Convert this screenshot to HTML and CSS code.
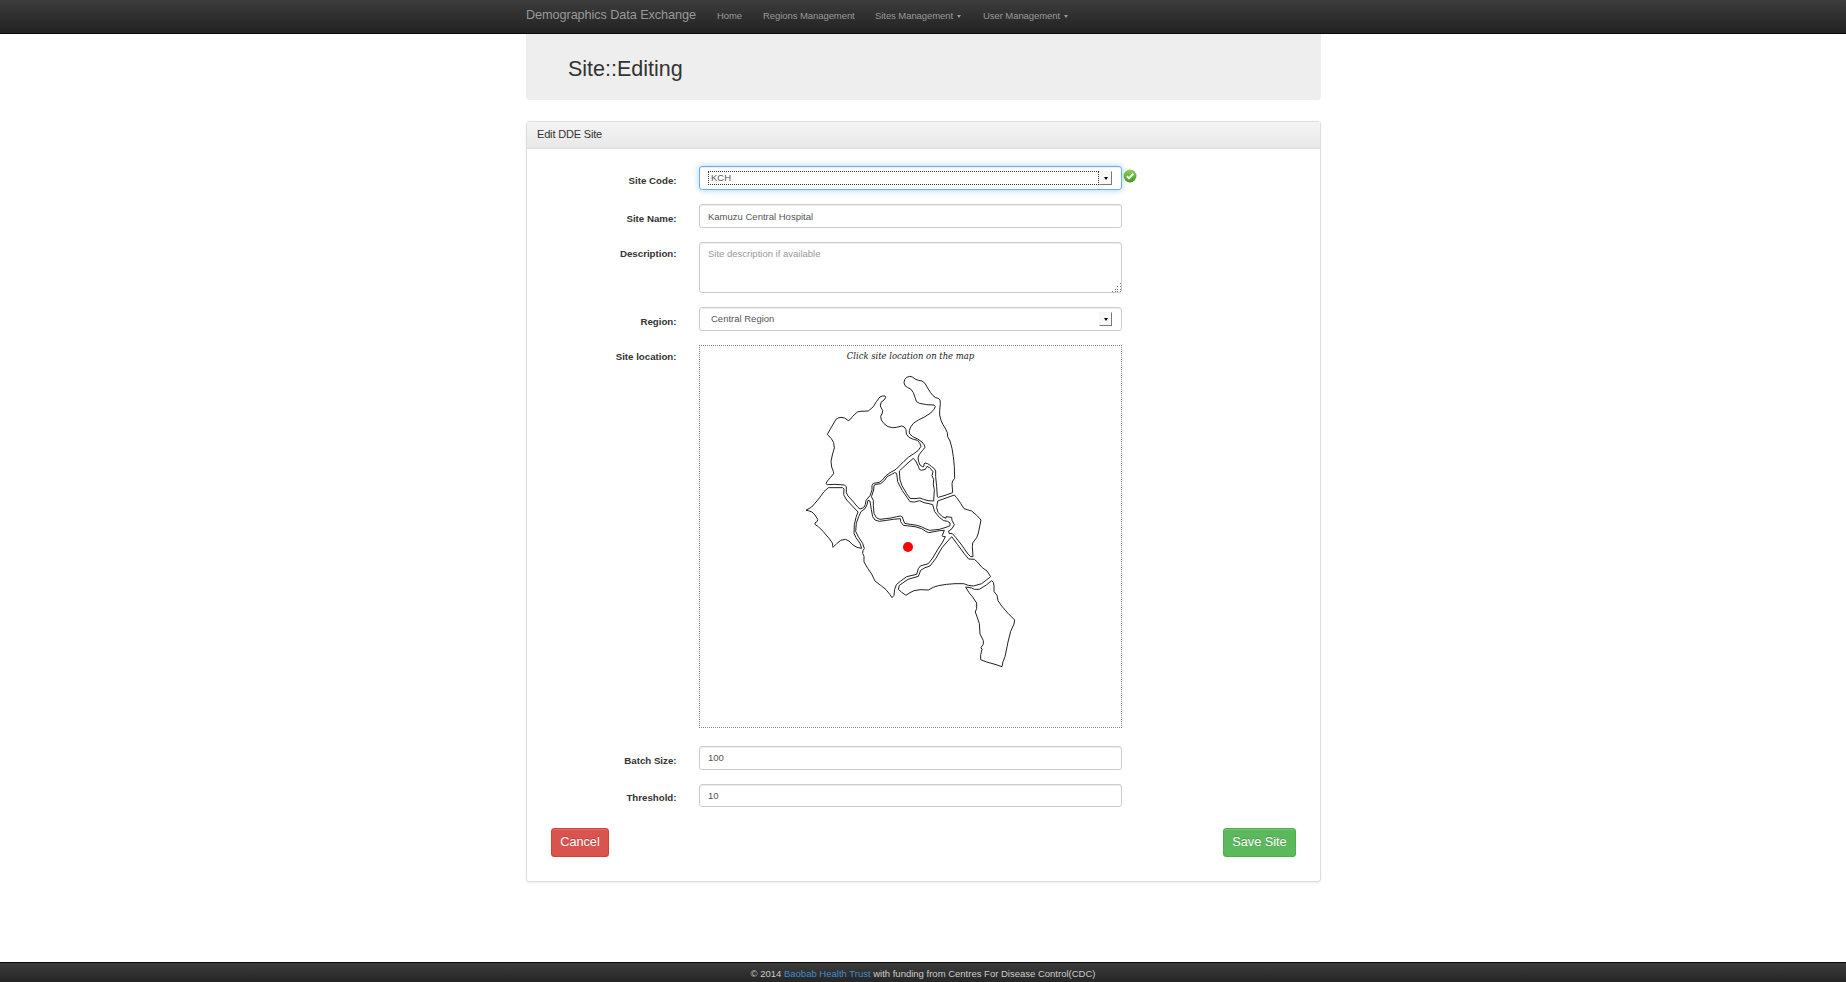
FILE: index.html
```html
<!DOCTYPE html>
<html lang="en">
<head>
<meta charset="utf-8">
<title>Demographics Data Exchange</title>
<link rel="stylesheet" href="styles.css">
</head>
<body>
<nav class="navbar">
  <div class="container nav-inner">
    <a class="brand">Demographics Data Exchange</a>
    <a class="nav-link home">Home</a>
    <a class="nav-link regions">Regions Management</a>
    <a class="nav-link sites">Sites Management<i class="caret"></i></a>
    <a class="nav-link">User Management<i class="caret"></i></a>
  </div>
</nav>
<main class="container">
  <header class="jumbotron"><h1>Site::Editing</h1></header>
  <section class="panel">
    <div class="panel-heading">Edit DDE Site</div>
    <form class="panel-body">
      <div class="row">
        <label>Site Code:</label>
        <div class="control select focused"><span class="value">KCH</span><span class="arrow"></span></div>
        <svg class="valid" viewBox="0 0 14 14"><defs><linearGradient id="ok" x2="0" y2="1"><stop stop-color="#8fd060"/><stop offset="1" stop-color="#3f9a20"/></linearGradient></defs><circle cx="7" cy="7" r="6.5" fill="url(#ok)"/><path d="M3.8 7.2l2.2 2.2 4.3-4.7" fill="none" stroke="#fff" stroke-width="2"/></svg>
      </div>
      <div class="row">
        <label>Site Name:</label>
        <div class="control name">Kamuzu Central Hospital</div>
      </div>
      <div class="row area-row">
        <label>Description:</label>
        <div class="control area">Site description if available
          <svg class="grip" viewBox="0 0 9 9"><path d="M8 0h1v1h-1zM8 3h1v1h-1zM5 3h1v1h-1zM8 6h1v1h-1zM5 6h1v1h-1zM3 6h1v1h-1zM8 8h1v1h-1zM5 8h1v1h-1zM3 8h1v1h-1zM0 8h1v1h-1z" fill="#777"/></svg>
        </div>
      </div>
      <div class="row">
        <label>Region:</label>
        <div class="control select"><span class="value">Central Region</span><span class="arrow"></span></div>
      </div>
      <div class="row map-row">
        <label>Site location:</label>
        <div class="map">
          <p class="map-title">Click site location on the map</p>
          <svg class="map-svg" viewBox="0 0 720 960">
            <g class="district">
              <path d="M372 68L374 59 380 52 389 49 397 51 405 57 415 61 426 63 435 70 443 84 451 97 459 107 466 113 475 115 480 120 481 130 479 152 479 165 483 181 489 194 497 207 502 218 503 230 510 243 516 265 520 290 523 320 524 355 518 363 516 371 518 398 495 406 475 412 472 410 470 380 467 350 467 333 463 326 455 320 449 315 443 311 435 309 432 312 432 319 427 320 420 315 416 305 414 294 418 283 427 272 435 262 433 255 426 246 413 237 398 230 388 220 388 211 392 201 400 190 415 180 435 170 452 159 462 148 466 140 462 135 440 134 418 130 409 124 405 112 400 98 392 87 382 82 375 77z"/>
              <path d="M142 223L155 200 168 178 174 174 183 172 194 174 205 182 211 178 218 169 232 156 240 154 265 153 280 140 289 125 300 111 307 108 315 108 317 113 312 120 303 127 301 138 308 152 307 159 302 169 304 180 312 191 324 200 338 203 350 202 365 198 373 201 378 209 379 222 387 232 400 238 413 241 420 251 423 259 415 271 400 282 386 291 372 304 348 328 330 338 318 347 307 360 298 367 280 370 276 376 276 390 270 407 258 421 256 434 251 443 240 447 232 440 218 423 204 408 199 398 199 380 193 375 165 373 142 374 138 371 142 363 151 353 161 341 160 334 155 321 153 304 157 285 163 264 161 248 154 236z"/>
              <path d="M78 451L95 441 105 430 118 414 132 395 145 383 188 383 192 387 191 404 200 420 220 441 234 456 228 472 223 494 222 520 228 533 240 550 245 565 231 562 219 555 207 543 197 538 182 541 170 551 159 562 157 549 148 536 129 514 115 500 105 493 105 489 112 484 113 478 105 465 96 456 85 452z"/>
              <path d="M264 421L261 434 255 446 243 455 236 470 229 490 227 514 236 532 248 550 253 566 249 571 248 580 252 589 252 606 263 625 275 642 285 663 302 676 318 689 330 704 336 713 342 706 344 688 349 674 361 664 380 650 410 643 415 626 421 618 445 611 458 594 474 567 488 546 496 530 488 529 487 526 493 511 479 512 446 518 437 514 425 506 405 500 370 496 362 485 361 476 340 478 320 481 298 484 285 480 278 470 274 449 270 423z"/>
              <path d="M275 408L281 390 282 376 288 373 302 371 314 361 321 350 335 343 344 338 350 340 353 365 367 392 381 412 390 425 404 426 419 422 432 428 447 431 458 434 464 455 478 472 491 482 503 484 510 489 510 497 498 502 478 508 449 511 438 507 424 500 406 495 390 493 374 490 370 480 367 471 361 468 350 470 333 474 300 478 289 473 282 460 280 436 280 421 274 410z"/>
              <path d="M358 333L377 315 400 295 407 303 415 319 418 328 424 331 436 328 441 319 449 323 459 335 456 347 461 358 460 374 463 389 461 423 444 422 430 418 420 414 405 416 390 415 380 401 366 377 360 360z"/>
              <path d="M473 423L523 405 530 413 542 430 552 446 562 449 575 453 590 466 603 480 600 495 595 519 590 533 578 549 577 560 579 590 572 590 564 582 545 555 527 532 517 521 507 520 506 513 516 506 523 494 516 481 515 472 498 470 498 475 487 470 474 457 470 443z"/>
              <path d="M515 530L533 554 552 580 566 597 583 598 592 606 607 623 621 633 632 650 619 660 605 671 580 678 565 676 551 671 525 671 500 673 475 677 460 682 445 690 420 689 402 692 390 698 378 706 365 697 355 688 358 676 384 658 415 649 422 631 435 623 450 618 467 596 486 563z"/>
              <path d="M557 681L575 684 583 688 598 688 619 675 635 662 640 667 642 677 642 695 651 706 654 722 665 738 684 760 704 780 702 792 692 814 684 846 675 890 669 905 666 920 645 913 620 906 602 899 602 884 606 868 603 863 610 852 610 842 600 822 598 790 592 773 586 756 590 745 590 729 578 711 567 698z"/>
            </g>
            <circle class="site-dot" cx="384" cy="561" r="15"/>
          </svg>
        </div>
      </div>
      <div class="row">
        <label>Batch Size:</label>
        <div class="control">100</div>
      </div>
      <div class="row last">
        <label>Threshold:</label>
        <div class="control">10</div>
      </div>
      <div class="actions">
        <a class="btn danger">Cancel</a>
        <a class="btn success">Save Site</a>
      </div>
    </form>
  </section>
</main>
<footer class="footer">© 2014&nbsp;<a>Baobab Health Trust</a>&nbsp;with funding from Centres For Disease Control(CDC)</footer>
</body>
</html>
```
FILE: styles.css
```css
* { box-sizing: border-box; }
body {
  margin: 0;
  height: 982px;
  display: flex;
  flex-direction: column;
  overflow: hidden;
  background: #fff;
  color: #333;
  font: 9.5px/14px "Liberation Sans", Arial, sans-serif;
}
.container { width: 795px; margin: 0 auto 0 526px; }
.navbar {
  height: 34px;
  flex: none;
  background: linear-gradient(#3c3c3c, #222);
  border-bottom: 1px solid #080808;
}
.nav-inner { display: flex; color: #999; line-height: 32px; white-space: nowrap; }
.brand { width: 191px; font-size: 12.7px; line-height: 30px; letter-spacing: -.08px; }
.nav-link { display: flex; align-items: center; height: 32px; letter-spacing: -.07px; }
.home { width: 46px; }
.regions { width: 112px; }
.sites { width: 108px; }
.caret { margin-left: 4px; border: 2.5px solid transparent; border-top: 3px solid #999; border-bottom: 0; }
.jumbotron { height: 66px; padding: 21px 42px; background: #eee; border-radius: 0 0 4px 4px; }
h1 { margin: 0; font-size: 21.5px; line-height: 28px; font-weight: 400; }
.panel {
  height: 761px;
  margin-top: 21px;
  border: 1px solid #ddd;
  border-radius: 3px;
  box-shadow: 0 1px 2px rgba(0, 0, 0, .08);
}
.panel-heading {
  height: 27px;
  padding-left: 10px;
  font-size: 11px;
  letter-spacing: -.17px;
  line-height: 25px;
  background: linear-gradient(#f5f5f5, #e8e8e8);
  border-bottom: 1px solid #ddd;
}
.panel-body { padding: 17px 24px 0; }
.row { display: flex; height: 24px; margin-bottom: 14px; }
label {
  width: 125.5px;
  margin-right: 22.5px;
  padding-top: 8px;
  text-align: right;
  font-size: 9.7px;
  font-weight: 700;
}
.control {
  width: 423px;
  height: 24px;
  padding: 0 8px;
  line-height: 22px;
  border: 1px solid #ccc;
  border-radius: 3px;
  color: #555;
  box-shadow: inset 0 1px 1px rgba(0, 0, 0, .075);
}
.name { line-height: 24px; }
.select { display: flex; align-items: center; padding-right: 9px; }
.focused { border-color: #66afe9; box-shadow: inset 0 1px 1px rgba(0, 0, 0, .075), 0 0 6px rgba(102, 175, 233, .6); }
.value { flex: 1; height: 14px; line-height: 12px; padding-left: 2px; border: 1px solid transparent; }
.focused .value { border: 1px dotted #333; }
.arrow {
  display: grid;
  place-items: center;
  width: 13px;
  height: 14px;
  background: #f8f8f8;
  border: 1px solid;
  border-color: #f5f5f5 #777 #777 #f5f5f5;
}
.arrow::before { content: ""; border: 2px solid transparent; border-top: 3px solid #000; border-bottom: 0; }
.valid { width: 14px; height: 14px; margin: 3px 0 0 1px; }
.area-row { height: 51px; }
.area-row label { padding-top: 5px; }
.area { position: relative; height: 51px; color: #999; }
.grip { position: absolute; right: 0; bottom: 0; width: 9px; height: 9px; }
.map-row { height: 383px; margin-bottom: 18px; }
.map-row label { padding-top: 5px; }
.map { width: 423px; height: 383px; border: 1px dotted #888; }
.map-title {
  margin: 0;
  height: 14px;
  padding-top: 3px;
  text-align: center;
  color: #222;
  font: italic 9.4px/14px "DejaVu Serif", serif;
  font-stretch: condensed;
}
.map-svg { display: block; width: 240px; height: 320px; margin-left: 80px; }
.district { fill: none; stroke: #222; stroke-width: 3; stroke-linejoin: round; }
.site-dot { fill: #f00; }
.last { height: 23px; margin-bottom: 21px; }
.last label { padding-top: 7px; }
.last .control { height: 23px; }
.actions { display: flex; justify-content: space-between; }
.btn {
  height: 29px;
  text-align: center;
  white-space: nowrap;
  font-size: 12.7px;
  line-height: 26px;
  color: #fff;
  border: 1px solid;
  border-radius: 3px;
  text-shadow: 0 -1px 0 rgba(0, 0, 0, .2);
  box-shadow: inset 0 1px 0 rgba(255, 255, 255, .15);
}
.danger { width: 58px; background: #d9534f; border-color: #d43f3a; }
.success { width: 73px; background: #5cb85c; border-color: #4cae4c; }
.footer {
  display: flex;
  justify-content: center;
  height: 20px;
  margin-top: auto;
  line-height: 21px;
  color: #ccc;
  background: linear-gradient(#3c3c3c, #252525);
  border-top: 1px solid #080808;
}
.footer a { color: #428bca; }
```
